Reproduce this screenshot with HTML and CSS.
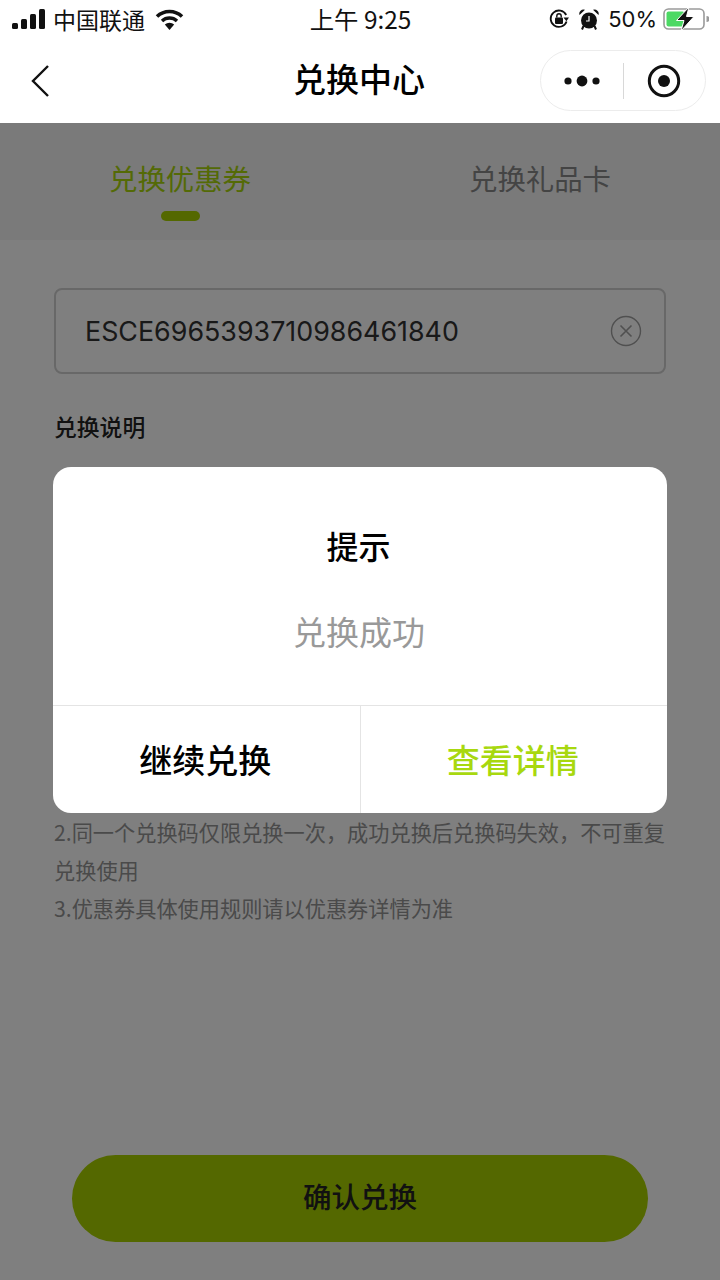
FILE: index.html
```html
<!DOCTYPE html>
<html lang="zh-CN">
<head>
    <meta charset="UTF-8">
    <meta name="viewport" content="width=device-width, initial-scale=1.0">
    <title>兑换中心</title>
    <link rel="stylesheet" href="styles.css">
</head>
<body>
    <div class="phone">
        <!-- Status bar -->
        <div class="status-bar">
            <div class="status-left">
                <svg class="signal" width="33" height="20" viewBox="0 0 33 20">
                    <rect x="0" y="14" width="6" height="6" rx="1.5" fill="#111"/>
                    <rect x="9" y="10" width="6" height="10" rx="1.5" fill="#111"/>
                    <rect x="18" y="5" width="6" height="15" rx="1.5" fill="#111"/>
                    <rect x="27" y="0" width="6" height="20" rx="1.5" fill="#111"/>
                </svg>
                <span class="carrier">中国联通</span>
                <svg class="wifi" width="29" height="21" viewBox="0 0 29 21">
                    <path d="M2 7.5 A18 18 0 0 1 27 7.5" fill="none" stroke="#111" stroke-width="3.6"/>
                    <path d="M7 12 A11 11 0 0 1 22 12" fill="none" stroke="#111" stroke-width="3.4"/>
                    <path d="M14.5 21 L9.8 15.6 A7 7 0 0 1 19.2 15.6 Z" fill="#111"/>
                </svg>
            </div>
            <div class="status-time">上午 9:25</div>
            <div class="status-right">
                <svg width="22" height="22" viewBox="0 0 22 22">
                    <path d="M18.6 13.5 A8.2 8.2 0 1 1 18.2 7" fill="none" stroke="#111" stroke-width="1.8"/>
                    <path d="M15.5 9.5 L21 9.5 L18.4 13.2 Z" fill="#111"/>
                    <rect x="7" y="9.5" width="8" height="6.5" rx="1" fill="#111"/>
                    <path d="M8.8 9.5 V8 A2.2 2.2 0 0 1 13.2 8 V9.5" fill="none" stroke="#111" stroke-width="1.4"/>
                </svg>
                <svg class="alarm" width="20" height="21" viewBox="0 0 20 21">
                    <circle cx="10" cy="11.5" r="8" fill="#111"/>
                    <path d="M0.5 6 A4.2 4.2 0 0 1 6 0.8 Z M19.5 6 A4.2 4.2 0 0 0 14 0.8 Z" fill="#111"/>
                    <path d="M10 7 V12 H7" fill="none" stroke="#fff" stroke-width="1.2"/>
                    <path d="M4.5 17 L3 20.5 M15.5 17 L17 20.5" stroke="#111" stroke-width="2"/>
                </svg>
                <span class="battery-text">50%</span>
                <svg class="battery" width="46" height="24" viewBox="0 0 46 24">
                    <rect x="1" y="2" width="40" height="20" rx="4.5" fill="none" stroke="#9a9a9a" stroke-width="1.6"/>
                    <rect x="3.5" y="4.5" width="18" height="15" rx="2" fill="#4cd964"/>
                    <path d="M43.5 9 A3 3 0 0 1 43.5 15 Z" fill="#9a9a9a"/>
                    <path d="M26 0 L13.5 13.5 H21 L18 24 L31 9.5 H23.5 Z" fill="#111" stroke="#fff" stroke-width="1"/>
                </svg>
            </div>
        </div>

        <!-- Nav bar -->
        <div class="nav-bar">
            <svg class="back" width="20" height="34" viewBox="0 0 20 34">
                <path d="M18 2 L3 17 L18 32" fill="none" stroke="#111" stroke-width="2.4"/>
            </svg>
            <div class="nav-title">兑换中心</div>
            <div class="capsule">
                <div class="capsule-btn">
                    <svg width="38" height="14" viewBox="0 0 38 14">
                        <circle cx="5" cy="7" r="3.6" fill="#111"/>
                        <circle cx="19" cy="7" r="5.4" fill="#111"/>
                        <circle cx="33" cy="7" r="3.6" fill="#111"/>
                    </svg>
                </div>
                <div class="capsule-line"></div>
                <div class="capsule-btn">
                    <svg width="34" height="34" viewBox="0 0 34 34">
                        <circle cx="17" cy="17" r="14.7" fill="none" stroke="#111" stroke-width="3"/>
                        <circle cx="17" cy="17" r="6" fill="#111"/>
                    </svg>
                </div>
            </div>
        </div>

        <!-- Page content -->
        <div class="page">
            <div class="tabs">
                <div class="tab tab-active">
                    <span>兑换优惠券</span>
                    <i class="tab-bar"></i>
                </div>
                <div class="tab">
                    <span>兑换礼品卡</span>
                </div>
            </div>

            <div class="content">
                <div class="code-input">
                    <span class="code-text">ESCE6965393710986461840</span>
                    <svg class="clear" width="32" height="32" viewBox="0 0 32 32">
                        <circle cx="16" cy="16" r="14.5" fill="none" stroke="#a0a0a0" stroke-width="1.4"/>
                        <path d="M10.5 10.5 L21.5 21.5 M21.5 10.5 L10.5 21.5" stroke="#a0a0a0" stroke-width="1.6"/>
                    </svg>
                </div>

                <h2 class="rules-title">兑换说明</h2>
                <div class="rules">
                    <p>1.兑换码需在有效期内使用，过期后将无法进行兑换，请尽快兑换使用</p>
                    <p>2.同一个兑换码仅限兑换一次，成功兑换后兑换码失效，不可重复兑换使用</p>
                    <p>3.优惠券具体使用规则请以优惠券详情为准</p>
                </div>
            </div>

            <button class="confirm" type="button">确认兑换</button>

            <!-- Modal -->
            <div class="mask"></div>
            <div class="dialog">
                <div class="dialog-body">
                    <div class="dialog-title">提示</div>
                    <div class="dialog-text">兑换成功</div>
                </div>
                <div class="dialog-actions">
                    <div class="dialog-btn">继续兑换</div>
                    <div class="dialog-btn dialog-btn-primary">查看详情</div>
                </div>
            </div>
        </div>
    </div>
</body>
</html>
```

FILE: styles.css
```css
* {
    box-sizing: border-box;
}
body {
    margin: 0;
    font-family: "Noto Sans CJK SC", "Noto Sans", sans-serif;
    background-color: #fff;
}
.phone {
    width: 720px;
    height: 1280px;
    display: flex;
    flex-direction: column;
    overflow: hidden;
}

/* status bar */
.status-bar {
    height: 38px;
    display: grid;
    grid-template-columns: 1fr auto 1fr;
    align-items: center;
    padding: 0 11px 0 12px;
    color: #111;
}
.status-left {
    display: flex;
    align-items: center;
}
.signal {
    margin-right: 8px;
}
.carrier {
    font-size: 23px;
    line-height: 38px;
}
.wifi {
    margin-left: 10px;
}
.status-time {
    font-size: 24.4px;
    line-height: 38px;
}
.status-right {
    display: flex;
    align-items: center;
    justify-content: flex-end;
}
.alarm {
    margin-left: 9px;
}
.battery-text {
    font-family: Inter, sans-serif;
    font-size: 22px;
    margin-left: 9px;
}
.battery {
    margin-left: 6px;
}

/* nav bar */
.nav-bar {
    height: 85px;
    position: relative;
    display: flex;
    align-items: center;
    justify-content: space-between;
    padding: 0 14px 0 30px;
    background-color: #fff;
}
.nav-title {
    position: absolute;
    left: 0;
    right: 2px;
    margin-bottom: 6px;
    text-align: center;
    font-size: 33px;
    line-height: 48px;
    font-weight: 500;
    color: #000;
}
.capsule {
    width: 166px;
    height: 61px;
    border: 1px solid #ececec;
    border-radius: 31px;
    display: flex;
    align-items: center;
}
.capsule-btn {
    flex: 1;
    display: flex;
    justify-content: center;
}
.capsule-line {
    width: 1px;
    height: 36px;
    background-color: #d8d8d8;
}

/* page */
.page {
    flex: 1;
    position: relative;
    display: flex;
    flex-direction: column;
    background-color: #fff;
}
.tabs {
    height: 117px;
    display: flex;
    background-color: #f4f4f4;
}
.tab {
    flex: 1;
    display: flex;
    flex-direction: column;
    align-items: center;
    padding-top: 34px;
    font-size: 28.4px;
    line-height: 42px;
    color: #888;
}
.tab-active {
    color: #a8d40c;
}
.tab-bar {
    width: 39px;
    height: 10px;
    margin-top: 12px;
    border-radius: 5px;
    background-color: #a8d000;
}
.content {
    flex: 1;
    padding: 48px 54px 0;
}
.code-input {
    height: 86px;
    display: flex;
    align-items: center;
    justify-content: space-between;
    padding: 0 22px 0 29px;
    border: 2px solid #d0d0d0;
    border-radius: 8px;
}
.code-text {
    font-family: Inter, sans-serif;
    font-size: 26.85px;
    color: #333;
}
.rules-title {
    margin: 34px 0 0;
    font-size: 22.8px;
    line-height: 38px;
    font-weight: 500;
    color: #222;
}
.rules {
    margin-top: 367px;
    font-size: 21.2px;
    line-height: 38px;
    color: #949494;
}
.rules p {
    margin: 0;
}
.rules p:first-child {
    display: none;
}
.confirm {
    width: 576px;
    height: 87px;
    margin: 0 auto 38px;
    padding: 0 0 7px;
    border: none;
    border-radius: 44px;
    background-color: #a8d000;
    color: #222;
    font-family: inherit;
    font-size: 28.5px;
    font-weight: 500;
}

/* modal */
.mask {
    position: absolute;
    inset: 0;
    background-color: rgba(0, 0, 0, 0.5);
}
.dialog {
    position: absolute;
    left: 53px;
    top: 344px;
    width: 614px;
    height: 346px;
    display: flex;
    flex-direction: column;
    border-radius: 18px;
    background-color: #fff;
    overflow: hidden;
}
.dialog-body {
    flex: 1;
    display: flex;
    flex-direction: column;
    align-items: center;
}
.dialog-title {
    margin-top: 54px;
    padding-right: 3px;
    font-size: 32px;
    line-height: 48px;
    font-weight: 500;
    color: #000;
}
.dialog-text {
    margin-top: 38px;
    padding-right: 2px;
    font-size: 33px;
    line-height: 48px;
    color: #999;
}
.dialog-actions {
    height: 108px;
    display: flex;
    border-top: 1px solid #e4e4e4;
}
.dialog-btn {
    flex: 1;
    display: flex;
    align-items: center;
    justify-content: center;
    padding: 0 2px 2px 0;
    font-size: 33px;
    font-weight: 500;
    color: #000;
}
.dialog-btn-primary {
    border-left: 1px solid #e4e4e4;
    color: #a8d80f;
}
```
